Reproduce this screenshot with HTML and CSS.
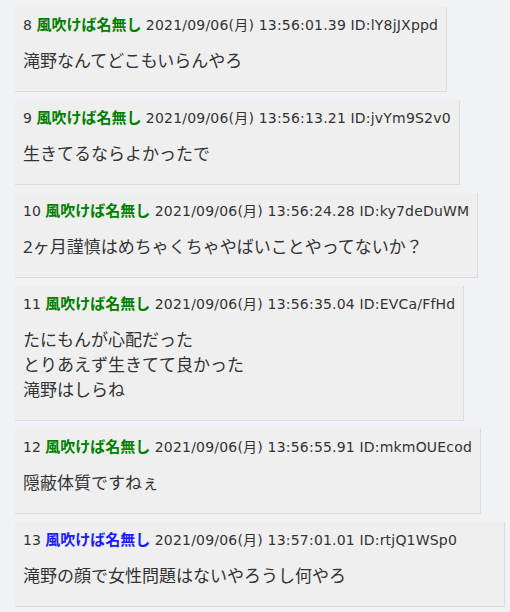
FILE: index.html
```html
<!DOCTYPE html>
<html lang="ja">
<head>
<meta charset="utf-8">
<link rel="stylesheet" href="styles.css">
</head>
<body>
<div class="thread">
  <div class="post">
    <div class="meta"><span class="num">8</span> <span class="name">風吹けば名無し</span> <span class="date">2021/09/06(月) 13:56:01.39</span> <span class="uid">ID:lY8jJXppd</span></div>
    <div class="message">滝野なんてどこもいらんやろ</div>
  </div>
  <div class="post">
    <div class="meta"><span class="num">9</span> <span class="name">風吹けば名無し</span> <span class="date">2021/09/06(月) 13:56:13.21</span> <span class="uid">ID:jvYm9S2v0</span></div>
    <div class="message">生きてるならよかったで</div>
  </div>
  <div class="post">
    <div class="meta"><span class="num">10</span> <span class="name">風吹けば名無し</span> <span class="date">2021/09/06(月) 13:56:24.28</span> <span class="uid">ID:ky7deDuWM</span></div>
    <div class="message">2ヶ月謹慎はめちゃくちゃやばいことやってないか？</div>
  </div>
  <div class="post">
    <div class="meta"><span class="num">11</span> <span class="name">風吹けば名無し</span> <span class="date">2021/09/06(月) 13:56:35.04</span> <span class="uid">ID:EVCa/FfHd</span></div>
    <div class="message">たにもんが心配だった<br>とりあえず生きてて良かった<br>滝野はしらね</div>
  </div>
  <div class="post">
    <div class="meta"><span class="num">12</span> <span class="name">風吹けば名無し</span> <span class="date">2021/09/06(月) 13:56:55.91</span> <span class="uid">ID:mkmOUEcod</span></div>
    <div class="message">隠蔽体質ですねぇ</div>
  </div>
  <div class="post post-wide">
    <div class="meta"><span class="num">13</span> <span class="name name-blue">風吹けば名無し</span> <span class="date">2021/09/06(月) 13:57:01.01</span> <span class="uid">ID:rtjQ1WSp0</span></div>
    <div class="message">滝野の顔で女性問題はないやろうし何やろ</div>
  </div>
</div>
</body>
</html>
```

FILE: styles.css
```css
html, body {
  margin: 0;
  background: #f1f2f5;
}
body {
  font-family: "Noto Sans", "Noto Sans CJK JP", sans-serif;
  color: #333;
}
.thread {
  padding: 7px 0 0 15px;
  display: flex;
  flex-direction: column;
  align-items: flex-start;
  gap: 8px;
}
.post {
  background: #efefef;
  border-right: 1px solid #dcdcdc;
  border-bottom: 1px solid #dcdcdc;
  padding: 8px 8px 0 8px;
}
.post-wide {
  box-sizing: border-box;
  width: 490px;
}
.meta {
  font-family: "DejaVu Sans", "Noto Sans CJK JP", sans-serif;
  font-size: 14px;
  line-height: 20px;
  height: 20px;
  white-space: nowrap;
}
.date, .uid {
  letter-spacing: 0.2px;
}
.name {
  font-family: "Noto Sans CJK JP", sans-serif;
  font-size: 15px;
  line-height: 14px;
  color: #008000;
  font-weight: bold;
}
.name-blue {
  color: #1a1aff;
}
.message {
  font-size: 17px;
  line-height: 25px;
  margin-top: 13px;
  padding-bottom: 18px;
}
```
